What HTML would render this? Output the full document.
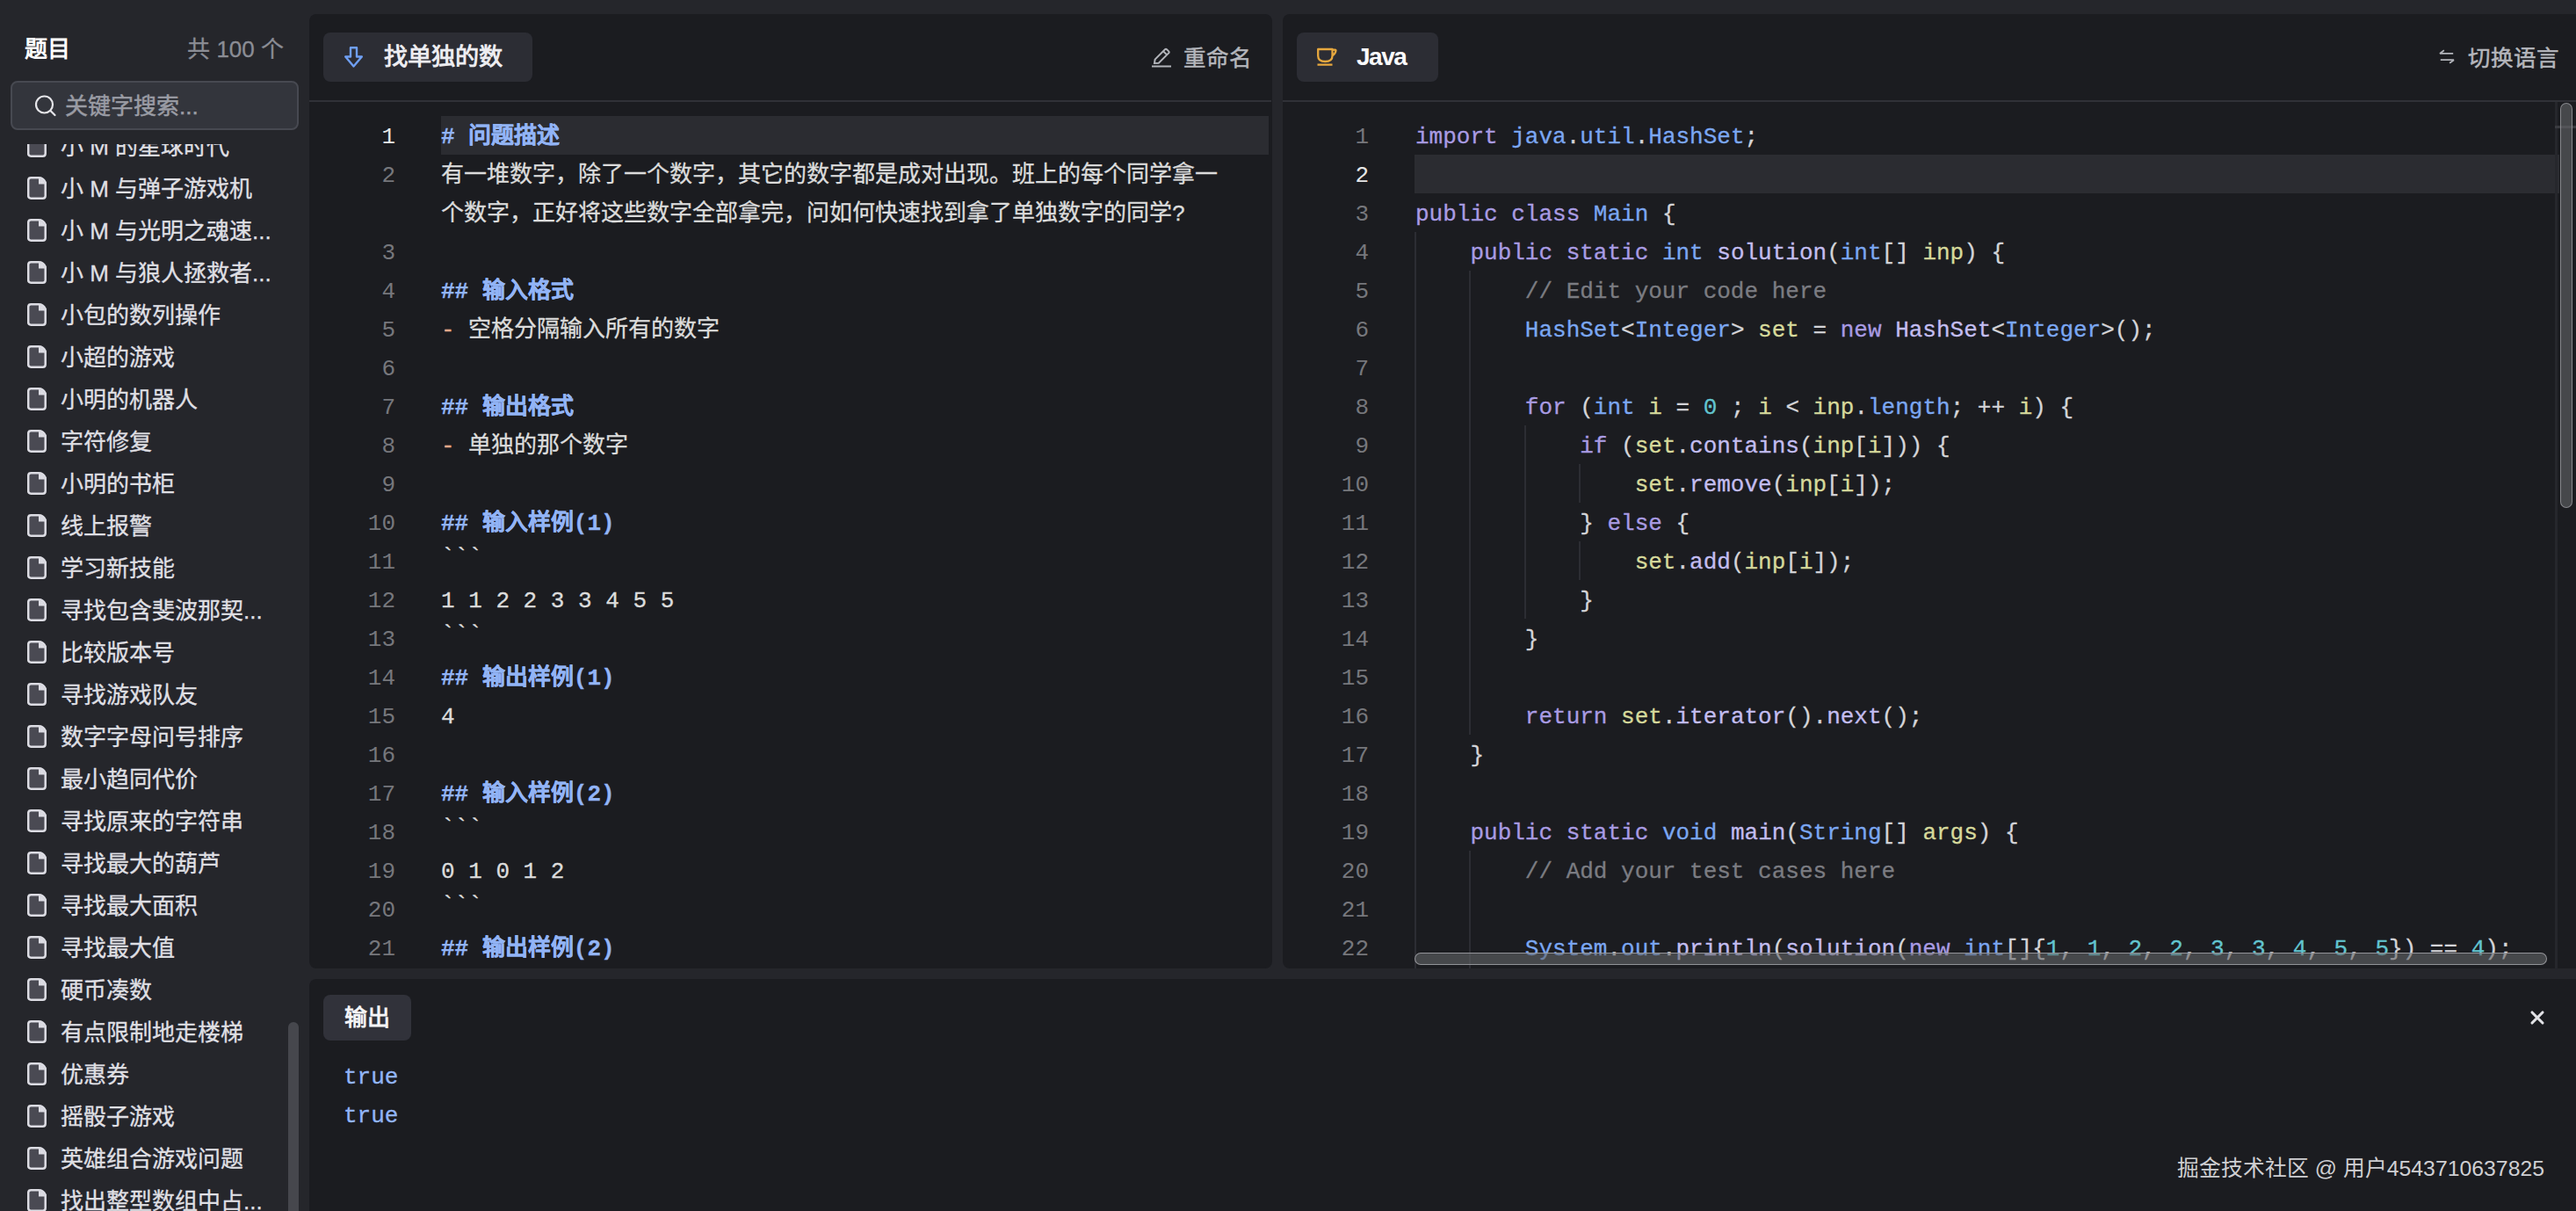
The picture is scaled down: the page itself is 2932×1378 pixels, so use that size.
<!DOCTYPE html><html lang="zh-CN"><head><meta charset="utf-8"><style>
*{margin:0;padding:0;box-sizing:border-box}
html,body{width:2932px;height:1378px;overflow:hidden;background:#25262b}
body{position:relative;font-family:"Liberation Sans",sans-serif;color:#ddd}
.a{position:absolute}
.mono{font-family:"Liberation Mono",monospace;font-size:26px;white-space:pre;-webkit-text-stroke:0.3px currentColor}
.row{position:absolute;height:44px;line-height:44px}
.ln{position:absolute;height:44px;line-height:44px;text-align:right;color:#76777c;font-family:"Liberation Mono",monospace;font-size:26px}
.kw{color:#a99be3}.ty{color:#7ba7f2}.fn{color:#c3bdf0}.v{color:#d6d99b}.nu{color:#62c4cf}.cm{color:#7b7c82}.pu{color:#d4d4d8}
.hd{color:#92b4f6;font-weight:bold;-webkit-text-stroke:0.3px #92b4f6}.bt{position:relative;top:-6px}.ds{color:#e3a888}
.item{position:absolute;left:0;height:48px;width:320px}
.item svg{position:absolute;left:31px;top:5px}
.item span{position:absolute;left:69px;top:-5px;font-size:26px;line-height:48px;color:#dfdfe3;white-space:nowrap;-webkit-text-stroke:0.35px #dfdfe3}
</style></head><body>

<div class="a" style="left:28px;top:36px;font-size:26px;line-height:40px;font-weight:bold;color:#fff">题目</div>
<div class="a" style="left:180px;width:143px;top:36px;font-size:26px;line-height:40px;color:#8b8d95;text-align:right;white-space:nowrap;-webkit-text-stroke:0.3px #8b8d95">共 100 个</div>
<div class="a" style="left:12px;top:92px;width:328px;height:56px;border:2px solid #474951;background:#33353c;border-radius:8px"></div>
<svg class="a" style="left:38px;top:106px" width="28" height="28" viewBox="0 0 28 28"><circle cx="12.5" cy="13" r="9.5" fill="none" stroke="#e6e6ea" stroke-width="2.2"/><path d="M19.5 20 L24.5 25" stroke="#e6e6ea" stroke-width="2.2" stroke-linecap="round"/></svg>
<div class="a" style="left:74px;top:101px;font-size:26px;line-height:40px;color:#9a9ca4;white-space:nowrap;-webkit-text-stroke:0.5px #9a9ca4">关键字搜索...</div>
<div class="a" style="left:0;top:164px;width:326px;height:1214px;overflow:hidden">
<div class="item" style="top:-16px"><svg width="22" height="26" viewBox="0 0 22 26"><path d="M4.2 1.3 H13.2 Q18 1.3 20.7 6.6 V21.7 Q20.7 24.7 17.7 24.7 H4.2 Q1.2 24.7 1.2 21.7 V4.3 Q1.2 1.3 4.2 1.3 Z" fill="#4a4a53" stroke="#dcdce3" stroke-width="2.5"/><path d="M13 1.5 V8.6 H20.6 Q19 3.2 13 1.5 Z" fill="#dcdce3"/></svg><span>小 M 的星球时代</span></div>
<div class="item" style="top:32px"><svg width="22" height="26" viewBox="0 0 22 26"><path d="M4.2 1.3 H13.2 Q18 1.3 20.7 6.6 V21.7 Q20.7 24.7 17.7 24.7 H4.2 Q1.2 24.7 1.2 21.7 V4.3 Q1.2 1.3 4.2 1.3 Z" fill="#4a4a53" stroke="#dcdce3" stroke-width="2.5"/><path d="M13 1.5 V8.6 H20.6 Q19 3.2 13 1.5 Z" fill="#dcdce3"/></svg><span>小 M 与弹子游戏机</span></div>
<div class="item" style="top:80px"><svg width="22" height="26" viewBox="0 0 22 26"><path d="M4.2 1.3 H13.2 Q18 1.3 20.7 6.6 V21.7 Q20.7 24.7 17.7 24.7 H4.2 Q1.2 24.7 1.2 21.7 V4.3 Q1.2 1.3 4.2 1.3 Z" fill="#4a4a53" stroke="#dcdce3" stroke-width="2.5"/><path d="M13 1.5 V8.6 H20.6 Q19 3.2 13 1.5 Z" fill="#dcdce3"/></svg><span>小 M 与光明之魂速...</span></div>
<div class="item" style="top:128px"><svg width="22" height="26" viewBox="0 0 22 26"><path d="M4.2 1.3 H13.2 Q18 1.3 20.7 6.6 V21.7 Q20.7 24.7 17.7 24.7 H4.2 Q1.2 24.7 1.2 21.7 V4.3 Q1.2 1.3 4.2 1.3 Z" fill="#4a4a53" stroke="#dcdce3" stroke-width="2.5"/><path d="M13 1.5 V8.6 H20.6 Q19 3.2 13 1.5 Z" fill="#dcdce3"/></svg><span>小 M 与狼人拯救者...</span></div>
<div class="item" style="top:176px"><svg width="22" height="26" viewBox="0 0 22 26"><path d="M4.2 1.3 H13.2 Q18 1.3 20.7 6.6 V21.7 Q20.7 24.7 17.7 24.7 H4.2 Q1.2 24.7 1.2 21.7 V4.3 Q1.2 1.3 4.2 1.3 Z" fill="#4a4a53" stroke="#dcdce3" stroke-width="2.5"/><path d="M13 1.5 V8.6 H20.6 Q19 3.2 13 1.5 Z" fill="#dcdce3"/></svg><span>小包的数列操作</span></div>
<div class="item" style="top:224px"><svg width="22" height="26" viewBox="0 0 22 26"><path d="M4.2 1.3 H13.2 Q18 1.3 20.7 6.6 V21.7 Q20.7 24.7 17.7 24.7 H4.2 Q1.2 24.7 1.2 21.7 V4.3 Q1.2 1.3 4.2 1.3 Z" fill="#4a4a53" stroke="#dcdce3" stroke-width="2.5"/><path d="M13 1.5 V8.6 H20.6 Q19 3.2 13 1.5 Z" fill="#dcdce3"/></svg><span>小超的游戏</span></div>
<div class="item" style="top:272px"><svg width="22" height="26" viewBox="0 0 22 26"><path d="M4.2 1.3 H13.2 Q18 1.3 20.7 6.6 V21.7 Q20.7 24.7 17.7 24.7 H4.2 Q1.2 24.7 1.2 21.7 V4.3 Q1.2 1.3 4.2 1.3 Z" fill="#4a4a53" stroke="#dcdce3" stroke-width="2.5"/><path d="M13 1.5 V8.6 H20.6 Q19 3.2 13 1.5 Z" fill="#dcdce3"/></svg><span>小明的机器人</span></div>
<div class="item" style="top:320px"><svg width="22" height="26" viewBox="0 0 22 26"><path d="M4.2 1.3 H13.2 Q18 1.3 20.7 6.6 V21.7 Q20.7 24.7 17.7 24.7 H4.2 Q1.2 24.7 1.2 21.7 V4.3 Q1.2 1.3 4.2 1.3 Z" fill="#4a4a53" stroke="#dcdce3" stroke-width="2.5"/><path d="M13 1.5 V8.6 H20.6 Q19 3.2 13 1.5 Z" fill="#dcdce3"/></svg><span>字符修复</span></div>
<div class="item" style="top:368px"><svg width="22" height="26" viewBox="0 0 22 26"><path d="M4.2 1.3 H13.2 Q18 1.3 20.7 6.6 V21.7 Q20.7 24.7 17.7 24.7 H4.2 Q1.2 24.7 1.2 21.7 V4.3 Q1.2 1.3 4.2 1.3 Z" fill="#4a4a53" stroke="#dcdce3" stroke-width="2.5"/><path d="M13 1.5 V8.6 H20.6 Q19 3.2 13 1.5 Z" fill="#dcdce3"/></svg><span>小明的书柜</span></div>
<div class="item" style="top:416px"><svg width="22" height="26" viewBox="0 0 22 26"><path d="M4.2 1.3 H13.2 Q18 1.3 20.7 6.6 V21.7 Q20.7 24.7 17.7 24.7 H4.2 Q1.2 24.7 1.2 21.7 V4.3 Q1.2 1.3 4.2 1.3 Z" fill="#4a4a53" stroke="#dcdce3" stroke-width="2.5"/><path d="M13 1.5 V8.6 H20.6 Q19 3.2 13 1.5 Z" fill="#dcdce3"/></svg><span>线上报警</span></div>
<div class="item" style="top:464px"><svg width="22" height="26" viewBox="0 0 22 26"><path d="M4.2 1.3 H13.2 Q18 1.3 20.7 6.6 V21.7 Q20.7 24.7 17.7 24.7 H4.2 Q1.2 24.7 1.2 21.7 V4.3 Q1.2 1.3 4.2 1.3 Z" fill="#4a4a53" stroke="#dcdce3" stroke-width="2.5"/><path d="M13 1.5 V8.6 H20.6 Q19 3.2 13 1.5 Z" fill="#dcdce3"/></svg><span>学习新技能</span></div>
<div class="item" style="top:512px"><svg width="22" height="26" viewBox="0 0 22 26"><path d="M4.2 1.3 H13.2 Q18 1.3 20.7 6.6 V21.7 Q20.7 24.7 17.7 24.7 H4.2 Q1.2 24.7 1.2 21.7 V4.3 Q1.2 1.3 4.2 1.3 Z" fill="#4a4a53" stroke="#dcdce3" stroke-width="2.5"/><path d="M13 1.5 V8.6 H20.6 Q19 3.2 13 1.5 Z" fill="#dcdce3"/></svg><span>寻找包含斐波那契...</span></div>
<div class="item" style="top:560px"><svg width="22" height="26" viewBox="0 0 22 26"><path d="M4.2 1.3 H13.2 Q18 1.3 20.7 6.6 V21.7 Q20.7 24.7 17.7 24.7 H4.2 Q1.2 24.7 1.2 21.7 V4.3 Q1.2 1.3 4.2 1.3 Z" fill="#4a4a53" stroke="#dcdce3" stroke-width="2.5"/><path d="M13 1.5 V8.6 H20.6 Q19 3.2 13 1.5 Z" fill="#dcdce3"/></svg><span>比较版本号</span></div>
<div class="item" style="top:608px"><svg width="22" height="26" viewBox="0 0 22 26"><path d="M4.2 1.3 H13.2 Q18 1.3 20.7 6.6 V21.7 Q20.7 24.7 17.7 24.7 H4.2 Q1.2 24.7 1.2 21.7 V4.3 Q1.2 1.3 4.2 1.3 Z" fill="#4a4a53" stroke="#dcdce3" stroke-width="2.5"/><path d="M13 1.5 V8.6 H20.6 Q19 3.2 13 1.5 Z" fill="#dcdce3"/></svg><span>寻找游戏队友</span></div>
<div class="item" style="top:656px"><svg width="22" height="26" viewBox="0 0 22 26"><path d="M4.2 1.3 H13.2 Q18 1.3 20.7 6.6 V21.7 Q20.7 24.7 17.7 24.7 H4.2 Q1.2 24.7 1.2 21.7 V4.3 Q1.2 1.3 4.2 1.3 Z" fill="#4a4a53" stroke="#dcdce3" stroke-width="2.5"/><path d="M13 1.5 V8.6 H20.6 Q19 3.2 13 1.5 Z" fill="#dcdce3"/></svg><span>数字字母问号排序</span></div>
<div class="item" style="top:704px"><svg width="22" height="26" viewBox="0 0 22 26"><path d="M4.2 1.3 H13.2 Q18 1.3 20.7 6.6 V21.7 Q20.7 24.7 17.7 24.7 H4.2 Q1.2 24.7 1.2 21.7 V4.3 Q1.2 1.3 4.2 1.3 Z" fill="#4a4a53" stroke="#dcdce3" stroke-width="2.5"/><path d="M13 1.5 V8.6 H20.6 Q19 3.2 13 1.5 Z" fill="#dcdce3"/></svg><span>最小趋同代价</span></div>
<div class="item" style="top:752px"><svg width="22" height="26" viewBox="0 0 22 26"><path d="M4.2 1.3 H13.2 Q18 1.3 20.7 6.6 V21.7 Q20.7 24.7 17.7 24.7 H4.2 Q1.2 24.7 1.2 21.7 V4.3 Q1.2 1.3 4.2 1.3 Z" fill="#4a4a53" stroke="#dcdce3" stroke-width="2.5"/><path d="M13 1.5 V8.6 H20.6 Q19 3.2 13 1.5 Z" fill="#dcdce3"/></svg><span>寻找原来的字符串</span></div>
<div class="item" style="top:800px"><svg width="22" height="26" viewBox="0 0 22 26"><path d="M4.2 1.3 H13.2 Q18 1.3 20.7 6.6 V21.7 Q20.7 24.7 17.7 24.7 H4.2 Q1.2 24.7 1.2 21.7 V4.3 Q1.2 1.3 4.2 1.3 Z" fill="#4a4a53" stroke="#dcdce3" stroke-width="2.5"/><path d="M13 1.5 V8.6 H20.6 Q19 3.2 13 1.5 Z" fill="#dcdce3"/></svg><span>寻找最大的葫芦</span></div>
<div class="item" style="top:848px"><svg width="22" height="26" viewBox="0 0 22 26"><path d="M4.2 1.3 H13.2 Q18 1.3 20.7 6.6 V21.7 Q20.7 24.7 17.7 24.7 H4.2 Q1.2 24.7 1.2 21.7 V4.3 Q1.2 1.3 4.2 1.3 Z" fill="#4a4a53" stroke="#dcdce3" stroke-width="2.5"/><path d="M13 1.5 V8.6 H20.6 Q19 3.2 13 1.5 Z" fill="#dcdce3"/></svg><span>寻找最大面积</span></div>
<div class="item" style="top:896px"><svg width="22" height="26" viewBox="0 0 22 26"><path d="M4.2 1.3 H13.2 Q18 1.3 20.7 6.6 V21.7 Q20.7 24.7 17.7 24.7 H4.2 Q1.2 24.7 1.2 21.7 V4.3 Q1.2 1.3 4.2 1.3 Z" fill="#4a4a53" stroke="#dcdce3" stroke-width="2.5"/><path d="M13 1.5 V8.6 H20.6 Q19 3.2 13 1.5 Z" fill="#dcdce3"/></svg><span>寻找最大值</span></div>
<div class="item" style="top:944px"><svg width="22" height="26" viewBox="0 0 22 26"><path d="M4.2 1.3 H13.2 Q18 1.3 20.7 6.6 V21.7 Q20.7 24.7 17.7 24.7 H4.2 Q1.2 24.7 1.2 21.7 V4.3 Q1.2 1.3 4.2 1.3 Z" fill="#4a4a53" stroke="#dcdce3" stroke-width="2.5"/><path d="M13 1.5 V8.6 H20.6 Q19 3.2 13 1.5 Z" fill="#dcdce3"/></svg><span>硬币凑数</span></div>
<div class="item" style="top:992px"><svg width="22" height="26" viewBox="0 0 22 26"><path d="M4.2 1.3 H13.2 Q18 1.3 20.7 6.6 V21.7 Q20.7 24.7 17.7 24.7 H4.2 Q1.2 24.7 1.2 21.7 V4.3 Q1.2 1.3 4.2 1.3 Z" fill="#4a4a53" stroke="#dcdce3" stroke-width="2.5"/><path d="M13 1.5 V8.6 H20.6 Q19 3.2 13 1.5 Z" fill="#dcdce3"/></svg><span>有点限制地走楼梯</span></div>
<div class="item" style="top:1040px"><svg width="22" height="26" viewBox="0 0 22 26"><path d="M4.2 1.3 H13.2 Q18 1.3 20.7 6.6 V21.7 Q20.7 24.7 17.7 24.7 H4.2 Q1.2 24.7 1.2 21.7 V4.3 Q1.2 1.3 4.2 1.3 Z" fill="#4a4a53" stroke="#dcdce3" stroke-width="2.5"/><path d="M13 1.5 V8.6 H20.6 Q19 3.2 13 1.5 Z" fill="#dcdce3"/></svg><span>优惠券</span></div>
<div class="item" style="top:1088px"><svg width="22" height="26" viewBox="0 0 22 26"><path d="M4.2 1.3 H13.2 Q18 1.3 20.7 6.6 V21.7 Q20.7 24.7 17.7 24.7 H4.2 Q1.2 24.7 1.2 21.7 V4.3 Q1.2 1.3 4.2 1.3 Z" fill="#4a4a53" stroke="#dcdce3" stroke-width="2.5"/><path d="M13 1.5 V8.6 H20.6 Q19 3.2 13 1.5 Z" fill="#dcdce3"/></svg><span>摇骰子游戏</span></div>
<div class="item" style="top:1136px"><svg width="22" height="26" viewBox="0 0 22 26"><path d="M4.2 1.3 H13.2 Q18 1.3 20.7 6.6 V21.7 Q20.7 24.7 17.7 24.7 H4.2 Q1.2 24.7 1.2 21.7 V4.3 Q1.2 1.3 4.2 1.3 Z" fill="#4a4a53" stroke="#dcdce3" stroke-width="2.5"/><path d="M13 1.5 V8.6 H20.6 Q19 3.2 13 1.5 Z" fill="#dcdce3"/></svg><span>英雄组合游戏问题</span></div>
<div class="item" style="top:1184px"><svg width="22" height="26" viewBox="0 0 22 26"><path d="M4.2 1.3 H13.2 Q18 1.3 20.7 6.6 V21.7 Q20.7 24.7 17.7 24.7 H4.2 Q1.2 24.7 1.2 21.7 V4.3 Q1.2 1.3 4.2 1.3 Z" fill="#4a4a53" stroke="#dcdce3" stroke-width="2.5"/><path d="M13 1.5 V8.6 H20.6 Q19 3.2 13 1.5 Z" fill="#dcdce3"/></svg><span>找出整型数组中占...</span></div>
</div>
<div class="a" style="left:328px;top:1163px;width:12px;height:240px;border-radius:6px;background:#46474d"></div>
<div class="a" style="left:352px;top:16px;width:1096px;height:1086px;background:#1b1c20;border-radius:8px;overflow:hidden">
<div class="a" style="left:0;top:98px;width:1095px;height:2px;background:#303137"></div>
<div class="a" style="left:16px;top:21px;width:238px;height:56px;background:#2c2d34;border-radius:8px"></div>
<svg class="a" style="left:38px;top:36px" width="26" height="26" viewBox="0 0 26 26"><path d="M9 2.2 H16 V12.5 H21.8 L12.5 23.5 L3.2 12.5 H9 Z" fill="none" stroke="#6f9ff2" stroke-width="2.4" stroke-linejoin="round"/></svg>
<div class="a" style="left:85px;top:29px;font-size:27.2px;line-height:40px;font-weight:bold;color:#ececf0;white-space:nowrap">找单独的数</div>
<svg class="a" style="left:958px;top:36px" width="24" height="26" viewBox="0 0 24 26"><path d="M4 20 L4.6 15.6 L16 4.2 Q17 3.2 18 4.2 L20.2 6.4 Q21.2 7.4 20.2 8.4 L8.8 19.8 Z M14 6.2 L18.2 10.4" fill="none" stroke="#b2b4ba" stroke-width="2"/><path d="M1 23.5 H23" stroke="#b2b4ba" stroke-width="2.2"/></svg>
<div class="a" style="left:995px;top:30px;font-size:25.5px;line-height:40px;color:#b4b6bc;white-space:nowrap;-webkit-text-stroke:0.5px #b4b6bc">重命名</div>
<div class="a" style="left:150px;top:116px;width:942px;height:44px;background:#2b2c31"></div>
<div class="ln" style="left:0;width:98px;top:118px;color:#e6e6e6">1</div>
<div class="row mono" style="left:150px;top:118px;color:#dcdcdc"><span class="hd"># 问题描述</span></div>
<div class="ln" style="left:0;width:98px;top:162px;color:#76777c">2</div>
<div class="row mono" style="left:150px;top:162px;color:#dcdcdc">有一堆数字，除了一个数字，其它的数字都是成对出现。班上的每个同学拿一</div>
<div class="row mono" style="left:150px;top:206px;color:#dcdcdc">个数字，正好将这些数字全部拿完，问如何快速找到拿了单独数字的同学?</div>
<div class="ln" style="left:0;width:98px;top:250px;color:#76777c">3</div>
<div class="ln" style="left:0;width:98px;top:294px;color:#76777c">4</div>
<div class="row mono" style="left:150px;top:294px;color:#dcdcdc"><span class="hd">## 输入格式</span></div>
<div class="ln" style="left:0;width:98px;top:338px;color:#76777c">5</div>
<div class="row mono" style="left:150px;top:338px;color:#dcdcdc"><span class="ds">-</span> 空格分隔输入所有的数字</div>
<div class="ln" style="left:0;width:98px;top:382px;color:#76777c">6</div>
<div class="ln" style="left:0;width:98px;top:426px;color:#76777c">7</div>
<div class="row mono" style="left:150px;top:426px;color:#dcdcdc"><span class="hd">## 输出格式</span></div>
<div class="ln" style="left:0;width:98px;top:470px;color:#76777c">8</div>
<div class="row mono" style="left:150px;top:470px;color:#dcdcdc"><span class="ds">-</span> 单独的那个数字</div>
<div class="ln" style="left:0;width:98px;top:514px;color:#76777c">9</div>
<div class="ln" style="left:0;width:98px;top:558px;color:#76777c">10</div>
<div class="row mono" style="left:150px;top:558px;color:#dcdcdc"><span class="hd">## 输入样例(1)</span></div>
<div class="ln" style="left:0;width:98px;top:602px;color:#76777c">11</div>
<div class="row mono" style="left:150px;top:602px;color:#dcdcdc"><span class="bt">```</span></div>
<div class="ln" style="left:0;width:98px;top:646px;color:#76777c">12</div>
<div class="row mono" style="left:150px;top:646px;color:#dcdcdc">1 1 2 2 3 3 4 5 5</div>
<div class="ln" style="left:0;width:98px;top:690px;color:#76777c">13</div>
<div class="row mono" style="left:150px;top:690px;color:#dcdcdc"><span class="bt">```</span></div>
<div class="ln" style="left:0;width:98px;top:734px;color:#76777c">14</div>
<div class="row mono" style="left:150px;top:734px;color:#dcdcdc"><span class="hd">## 输出样例(1)</span></div>
<div class="ln" style="left:0;width:98px;top:778px;color:#76777c">15</div>
<div class="row mono" style="left:150px;top:778px;color:#dcdcdc">4</div>
<div class="ln" style="left:0;width:98px;top:822px;color:#76777c">16</div>
<div class="ln" style="left:0;width:98px;top:866px;color:#76777c">17</div>
<div class="row mono" style="left:150px;top:866px;color:#dcdcdc"><span class="hd">## 输入样例(2)</span></div>
<div class="ln" style="left:0;width:98px;top:910px;color:#76777c">18</div>
<div class="row mono" style="left:150px;top:910px;color:#dcdcdc"><span class="bt">```</span></div>
<div class="ln" style="left:0;width:98px;top:954px;color:#76777c">19</div>
<div class="row mono" style="left:150px;top:954px;color:#dcdcdc">0 1 0 1 2</div>
<div class="ln" style="left:0;width:98px;top:998px;color:#76777c">20</div>
<div class="row mono" style="left:150px;top:998px;color:#dcdcdc"><span class="bt">```</span></div>
<div class="ln" style="left:0;width:98px;top:1042px;color:#76777c">21</div>
<div class="row mono" style="left:150px;top:1042px;color:#dcdcdc"><span class="hd">## 输出样例(2)</span></div>
<div class="ln" style="left:0;width:98px;top:1086px;color:#76777c">22</div>
</div>
<div class="a" style="left:1460px;top:16px;width:1472px;height:1086px;background:#1b1c20;border-radius:8px 0 0 8px;overflow:hidden">
<div class="a" style="left:0;top:98px;width:1472px;height:2px;background:#303137"></div>
<div class="a" style="left:16px;top:21px;width:161px;height:56px;background:#2c2d34;border-radius:8px"></div>
<svg class="a" style="left:38px;top:38px" width="26" height="22" viewBox="0 0 26 22"><path d="M2.2 2 H18.5 V9.5 Q18.5 16 10.3 16 Q2.2 16 2.2 9.5 Z M18.5 3 Q22.5 2.2 22.5 3.5 Q22.2 7 18.3 9.5" fill="none" stroke="#e7a83e" stroke-width="2.3" stroke-linejoin="round"/><path d="M1.5 19.6 H18.5" stroke="#e7a83e" stroke-width="2.4"/></svg>
<div class="a" style="left:84px;top:29px;font-size:28px;line-height:40px;font-weight:bold;color:#fafafc;white-space:nowrap;letter-spacing:-1.5px">Java</div>
<svg class="a" style="left:1315px;top:40px" width="20" height="18" viewBox="0 0 22 20"><path d="M2 5.5 H19 M2 5.5 L7.5 1.5 M20 13.5 H3 M20 13.5 L14.5 17.5" fill="none" stroke="#b2b4ba" stroke-width="2"/></svg>
<div class="a" style="left:1349px;top:30px;font-size:25.5px;line-height:40px;color:#b4b6bc;white-space:nowrap;-webkit-text-stroke:0.5px #b4b6bc">切换语言</div>
<div class="a" style="left:150px;top:160px;width:1303px;height:44px;background:#2b2c31"></div>
<div class="a" style="left:150.0px;top:248px;width:2px;height:880px;background:#2c2d33"></div>
<div class="a" style="left:212.4px;top:292px;width:2px;height:528px;background:#2c2d33"></div>
<div class="a" style="left:212.4px;top:952px;width:2px;height:176px;background:#2c2d33"></div>
<div class="a" style="left:274.8px;top:468px;width:2px;height:220px;background:#2c2d33"></div>
<div class="a" style="left:337.2px;top:512px;width:2px;height:44px;background:#2c2d33"></div>
<div class="a" style="left:337.2px;top:600px;width:2px;height:44px;background:#2c2d33"></div>
<div class="ln" style="left:0;width:98px;top:118px;color:#76777c">1</div>
<div class="row mono" style="left:151px;top:118px;color:#d4d4d8"><span class="kw">import</span> <span class="ty">java</span><span class="pu">.</span><span class="ty">util</span><span class="pu">.</span><span class="ty">HashSet</span><span class="pu">;</span></div>
<div class="ln" style="left:0;width:98px;top:162px;color:#e6e6e6">2</div>
<div class="ln" style="left:0;width:98px;top:206px;color:#76777c">3</div>
<div class="row mono" style="left:151px;top:206px;color:#d4d4d8"><span class="kw">public</span> <span class="kw">class</span> <span class="ty">Main</span> <span class="pu">{</span></div>
<div class="ln" style="left:0;width:98px;top:250px;color:#76777c">4</div>
<div class="row mono" style="left:151px;top:250px;color:#d4d4d8">    <span class="kw">public</span> <span class="kw">static</span> <span class="ty">int</span> <span class="fn">solution</span><span class="pu">(</span><span class="ty">int</span><span class="pu">[]</span> <span class="v">inp</span><span class="pu">) {</span></div>
<div class="ln" style="left:0;width:98px;top:294px;color:#76777c">5</div>
<div class="row mono" style="left:151px;top:294px;color:#d4d4d8">        <span class="cm">// Edit your code here</span></div>
<div class="ln" style="left:0;width:98px;top:338px;color:#76777c">6</div>
<div class="row mono" style="left:151px;top:338px;color:#d4d4d8">        <span class="ty">HashSet</span><span class="pu">&lt;</span><span class="ty">Integer</span><span class="pu">&gt;</span> <span class="v">set</span> <span class="pu">=</span> <span class="kw">new</span> <span class="fn">HashSet</span><span class="pu">&lt;</span><span class="ty">Integer</span><span class="pu">&gt;();</span></div>
<div class="ln" style="left:0;width:98px;top:382px;color:#76777c">7</div>
<div class="ln" style="left:0;width:98px;top:426px;color:#76777c">8</div>
<div class="row mono" style="left:151px;top:426px;color:#d4d4d8">        <span class="kw">for</span> <span class="pu">(</span><span class="ty">int</span> <span class="v">i</span> <span class="pu">=</span> <span class="nu">0</span> <span class="pu">;</span> <span class="v">i</span> <span class="pu">&lt;</span> <span class="v">inp</span><span class="pu">.</span><span class="ty">length</span><span class="pu">;</span> <span class="pu">++</span> <span class="v">i</span><span class="pu">) {</span></div>
<div class="ln" style="left:0;width:98px;top:470px;color:#76777c">9</div>
<div class="row mono" style="left:151px;top:470px;color:#d4d4d8">            <span class="kw">if</span> <span class="pu">(</span><span class="v">set</span><span class="pu">.</span><span class="fn">contains</span><span class="pu">(</span><span class="v">inp</span><span class="pu">[</span><span class="v">i</span><span class="pu">])) {</span></div>
<div class="ln" style="left:0;width:98px;top:514px;color:#76777c">10</div>
<div class="row mono" style="left:151px;top:514px;color:#d4d4d8">                <span class="v">set</span><span class="pu">.</span><span class="fn">remove</span><span class="pu">(</span><span class="v">inp</span><span class="pu">[</span><span class="v">i</span><span class="pu">]);</span></div>
<div class="ln" style="left:0;width:98px;top:558px;color:#76777c">11</div>
<div class="row mono" style="left:151px;top:558px;color:#d4d4d8">            <span class="pu">}</span> <span class="kw">else</span> <span class="pu">{</span></div>
<div class="ln" style="left:0;width:98px;top:602px;color:#76777c">12</div>
<div class="row mono" style="left:151px;top:602px;color:#d4d4d8">                <span class="v">set</span><span class="pu">.</span><span class="fn">add</span><span class="pu">(</span><span class="v">inp</span><span class="pu">[</span><span class="v">i</span><span class="pu">]);</span></div>
<div class="ln" style="left:0;width:98px;top:646px;color:#76777c">13</div>
<div class="row mono" style="left:151px;top:646px;color:#d4d4d8">            <span class="pu">}</span></div>
<div class="ln" style="left:0;width:98px;top:690px;color:#76777c">14</div>
<div class="row mono" style="left:151px;top:690px;color:#d4d4d8">        <span class="pu">}</span></div>
<div class="ln" style="left:0;width:98px;top:734px;color:#76777c">15</div>
<div class="ln" style="left:0;width:98px;top:778px;color:#76777c">16</div>
<div class="row mono" style="left:151px;top:778px;color:#d4d4d8">        <span class="kw">return</span> <span class="v">set</span><span class="pu">.</span><span class="fn">iterator</span><span class="pu">().</span><span class="fn">next</span><span class="pu">();</span></div>
<div class="ln" style="left:0;width:98px;top:822px;color:#76777c">17</div>
<div class="row mono" style="left:151px;top:822px;color:#d4d4d8">    <span class="pu">}</span></div>
<div class="ln" style="left:0;width:98px;top:866px;color:#76777c">18</div>
<div class="ln" style="left:0;width:98px;top:910px;color:#76777c">19</div>
<div class="row mono" style="left:151px;top:910px;color:#d4d4d8">    <span class="kw">public</span> <span class="kw">static</span> <span class="ty">void</span> <span class="fn">main</span><span class="pu">(</span><span class="ty">String</span><span class="pu">[]</span> <span class="v">args</span><span class="pu">) {</span></div>
<div class="ln" style="left:0;width:98px;top:954px;color:#76777c">20</div>
<div class="row mono" style="left:151px;top:954px;color:#d4d4d8">        <span class="cm">// Add your test cases here</span></div>
<div class="ln" style="left:0;width:98px;top:998px;color:#76777c">21</div>
<div class="ln" style="left:0;width:98px;top:1042px;color:#76777c">22</div>
<div class="row mono" style="left:151px;top:1042px;color:#d4d4d8">        <span class="ty">System</span><span class="pu">.</span><span class="ty">out</span><span class="pu">.</span><span class="fn">println</span><span class="pu">(</span><span class="fn">solution</span><span class="pu">(</span><span class="kw">new</span> <span class="ty">int</span><span class="pu">[]{</span><span class="nu">1</span><span class="pu">, </span><span class="nu">1</span><span class="pu">, </span><span class="nu">2</span><span class="pu">, </span><span class="nu">2</span><span class="pu">, </span><span class="nu">3</span><span class="pu">, </span><span class="nu">3</span><span class="pu">, </span><span class="nu">4</span><span class="pu">, </span><span class="nu">5</span><span class="pu">, </span><span class="nu">5</span><span class="pu">})</span> <span class="pu">==</span> <span class="nu">4</span><span class="pu">);</span></div>
<div class="ln" style="left:0;width:98px;top:1086px;color:#76777c">23</div>
<div class="a" style="left:1448px;top:100px;width:3px;height:986px;background:#26272c"></div>
<div class="a" style="left:1448px;top:127px;width:24px;height:3px;background:#3a3b40"></div>
<div class="a" style="left:1454px;top:101px;width:14px;height:461px;border-radius:7px;background:rgba(100,101,105,0.6);border:1.5px solid rgba(150,151,156,0.8)"></div>
<div class="a" style="left:150px;top:1068px;width:1289px;height:14px;border-radius:7px;background:rgba(100,101,105,0.6);border:1.5px solid rgba(160,161,166,0.85)"></div>
</div>
<div class="a" style="left:352px;top:1114px;width:2580px;height:264px;background:#1b1c20;border-radius:8px 0 0 0">
<div class="a" style="left:16px;top:18px;width:100px;height:52px;background:#31323a;border-radius:8px"></div>
<div class="a" style="left:40px;top:24px;font-size:26px;line-height:40px;font-weight:bold;color:#f4f4f6">输出</div>
<div class="row mono" style="left:39px;top:90px;color:#92b5f8">true</div>
<div class="row mono" style="left:39px;top:134px;color:#92b5f8">true</div>
<svg class="a" style="left:2526px;top:34px" width="20" height="20" viewBox="0 0 20 20"><path d="M4 4 L16 16 M16 4 L4 16" stroke="#e2e2e6" stroke-width="3.1" stroke-linecap="round"/></svg>
<div class="a" style="left:2000px;width:2544px;top:196px;font-size:24.8px;line-height:40px;color:#cfcfd2;white-space:nowrap;text-align:right;left:0">掘金技术社区 @ 用户4543710637825</div>
</div>
</body></html>
